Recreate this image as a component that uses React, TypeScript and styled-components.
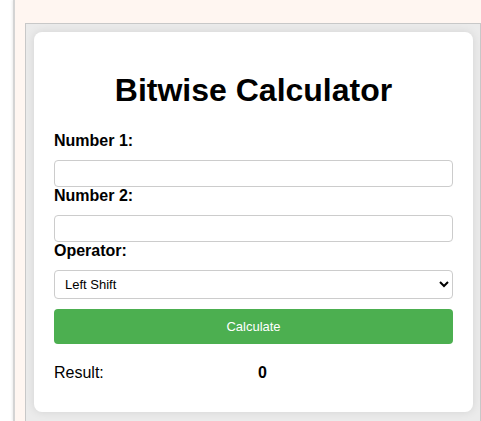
import React, { useState } from "react";
import styled, { createGlobalStyle } from "styled-components";

const GlobalStyle = createGlobalStyle`
  html, body {
    margin: 0;
    padding: 0;
    background: #ffffff;
    font-family: "Liberation Sans", Arial, sans-serif;
    overflow: hidden;
  }
`;

const ops: Record<string, (a: number, b: number) => number> = {
  and: (a, b) => a & b,
  or: (a, b) => a | b,
  xor: (a, b) => a ^ b,
  left: (a, b) => a << b,
  right: (a, b) => a >> b,
};

const App = () => {
  const [num1, setNum1] = useState("");
  const [num2, setNum2] = useState("");
  const [op, setOp] = useState("left");
  const [result, setResult] = useState(0);

  const calculate = () => {
    const a = parseInt(num1, 10) || 0;
    const b = parseInt(num2, 10) || 0;
    setResult(ops[op](a, b));
  };

  return (
    <Page>
      <GlobalStyle />
      <Gutter />
      <Main>
        <Frame>
          <Card>
            <Title>Bitwise Calculator</Title>
            <Label htmlFor="num1">Number 1:</Label>
            <Input id="num1" type="number" value={num1} onChange={(e) => setNum1(e.target.value)} />
            <Label htmlFor="num2">Number 2:</Label>
            <Input id="num2" type="number" value={num2} onChange={(e) => setNum2(e.target.value)} />
            <Label htmlFor="op">Operator:</Label>
            <Select id="op" value={op} onChange={(e) => setOp(e.target.value)}>
              <option value="and">AND</option>
              <option value="or">OR</option>
              <option value="xor">XOR</option>
              <option value="left">Left Shift</option>
              <option value="right">Right Shift</option>
            </Select>
            <Button onClick={calculate}>Calculate</Button>
            <ResultRow>
              <span>Result:</span>
              <ResultValue>{result}</ResultValue>
            </ResultRow>
          </Card>
        </Frame>
      </Main>
    </Page>
  );
};

const Page = styled.div`
  display: flex;
  height: 421px;
  overflow: hidden;
`;

const Gutter = styled.div`
  width: 13px;
  flex-shrink: 0;
  background: #ffffff;
`;

const Main = styled.div`
  flex: 1;
  background: #fff6f1;
  border-left: 2px solid #d4d4d4;
  box-shadow: -1px 0 2px rgba(0, 0, 0, 0.08);
  padding: 23px 0 0 10px;
`;

const Frame = styled.div`
  border: 1px solid #c8c8c8;
  background: #ebebeb;
  padding: 8px 7px 30px 8px;
`;

const Card = styled.div`
  background: #ffffff;
  border-radius: 8px;
  padding: 20px;
  box-shadow: 0 0 10px rgba(0, 0, 0, 0.1);
`;

const Title = styled.h1`
  margin: 20px 0 23px;
  font-size: 32px;
  font-weight: bold;
  text-align: center;
  color: #000;
`;

const Label = styled.label`
  display: block;
  margin-bottom: 10px;
  font-size: 16px;
  font-weight: bold;
  color: #000;
`;

const Input = styled.input`
  display: block;
  box-sizing: border-box;
  width: 100%;
  height: 27px;
  margin: 0;
  padding: 5px 8px;
  border: 1px solid #cccccc;
  border-radius: 4px;
  font-family: "Liberation Sans", Arial, sans-serif;
  font-size: 13px;
  outline: none;
`;

const Select = styled.select`
  display: block;
  box-sizing: border-box;
  width: 100%;
  height: 29px;
  margin: 0 0 10px;
  padding: 4px 6px;
  border: 1px solid #cccccc;
  border-radius: 4px;
  background: #ffffff;
  font-family: "Liberation Sans", Arial, sans-serif;
  font-size: 13px;
  color: #000;
`;

const Button = styled.button`
  display: block;
  width: 100%;
  height: 35px;
  border: none;
  border-radius: 4px;
  background: #4caf50;
  color: #ffffff;
  font-family: "Liberation Sans", Arial, sans-serif;
  font-size: 13px;
  cursor: pointer;
`;

const ResultRow = styled.div`
  display: grid;
  grid-template-columns: 204px auto;
  margin: 20px 0 10px;
  font-size: 16px;
  color: #000;
`;

const ResultValue = styled.span`
  font-weight: bold;
`;

export default App;
